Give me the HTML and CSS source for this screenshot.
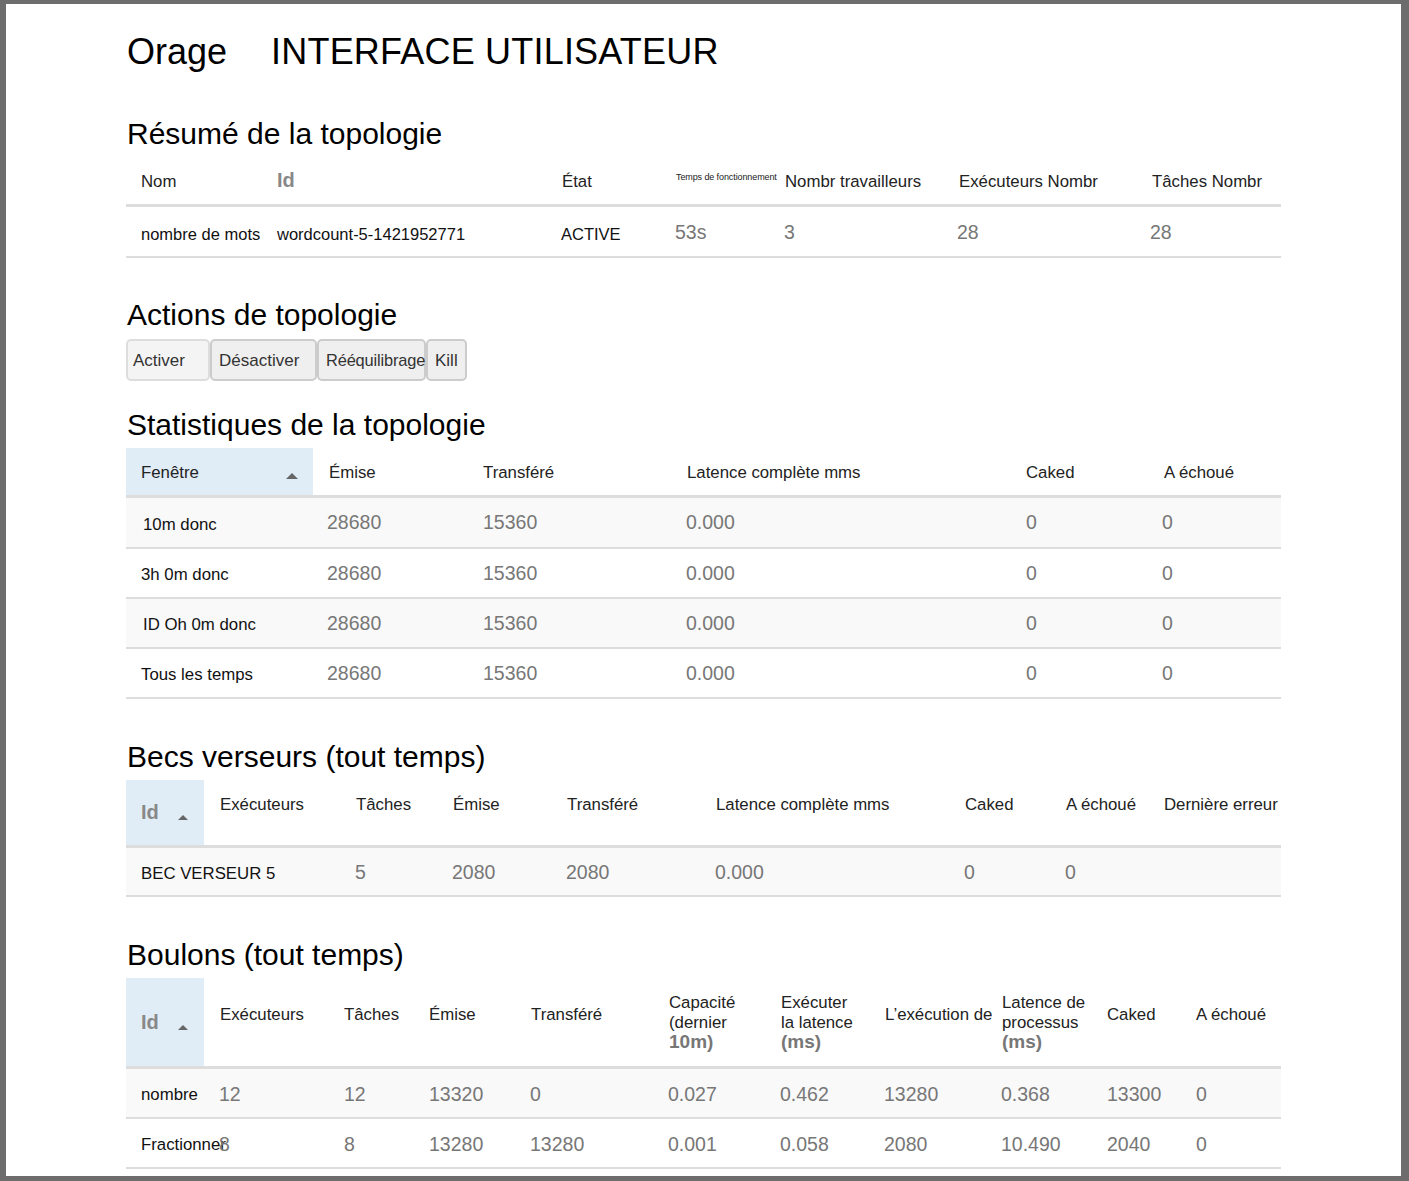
FILE: index.html
```html
<!DOCTYPE html>
<html lang="fr">
<head>
    <meta charset="UTF-8">
    <meta name="viewport" content="width=device-width, initial-scale=1.0">
    <title>Orage INTERFACE UTILISATEUR</title>
    <link rel="stylesheet" href="styles.css">
</head>
<body>
    <div class="page">
        <h1><span>Orage</span><span class="title-app">INTERFACE UTILISATEUR</span></h1>

        <h2>Résumé de la topologie</h2>
        <table class="summary">
            <thead>
                <tr>
                    <th>Nom</th>
                    <th class="muted-head">Id</th>
                    <th>État</th>
                    <th class="tiny">Temps de fonctionnement</th>
                    <th>Nombr travailleurs</th>
                    <th>Exécuteurs Nombr</th>
                    <th>Tâches Nombr</th>
                </tr>
            </thead>
            <tbody>
                <tr>
                    <td class="name">nombre de mots</td>
                    <td class="name">wordcount-5-1421952771</td>
                    <td class="name">ACTIVE</td>
                    <td>53s</td>
                    <td>3</td>
                    <td>28</td>
                    <td>28</td>
                </tr>
            </tbody>
        </table>

        <h2 class="actions-title">Actions de topologie</h2>
        <div class="actions">
            <button class="btn-activate">Activer</button>
            <button class="btn-deactivate">Désactiver</button>
            <button class="btn-rebalance">Rééquilibrage</button>
            <button class="btn-kill">Kill</button>
        </div>

        <h2 class="after-actions">Statistiques de la topologie</h2>
        <table class="stats">
            <thead>
                <tr>
                    <th class="sorted">Fenêtre<span class="caret caret-wide"></span></th>
                    <th>Émise</th>
                    <th>Transféré</th>
                    <th>Latence complète mms</th>
                    <th>Caked</th>
                    <th>A échoué</th>
                </tr>
            </thead>
            <tbody>
                <tr>
                    <td class="name inset">10m donc</td>
                    <td>28680</td><td>15360</td><td>0.000</td><td>0</td><td>0</td>
                </tr>
                <tr>
                    <td class="name">3h 0m donc</td>
                    <td>28680</td><td>15360</td><td>0.000</td><td>0</td><td>0</td>
                </tr>
                <tr>
                    <td class="name inset">ID Oh 0m donc</td>
                    <td>28680</td><td>15360</td><td>0.000</td><td>0</td><td>0</td>
                </tr>
                <tr>
                    <td class="name">Tous les temps</td>
                    <td>28680</td><td>15360</td><td>0.000</td><td>0</td><td>0</td>
                </tr>
            </tbody>
        </table>

        <h2 class="spouts-title">Becs verseurs (tout temps)</h2>
        <table class="spouts raised">
            <thead>
                <tr>
                    <th class="sorted id-head">Id<span class="caret"></span></th>
                    <th>Exécuteurs</th>
                    <th>Tâches</th>
                    <th>Émise</th>
                    <th>Transféré</th>
                    <th>Latence complète mms</th>
                    <th>Caked</th>
                    <th>A échoué</th>
                    <th>Dernière erreur</th>
                </tr>
            </thead>
            <tbody>
                <tr>
                    <td class="name">BEC VERSEUR 5</td>
                    <td></td>
                    <td>5</td><td>2080</td><td>2080</td><td>0.000</td><td>0</td><td>0</td><td></td>
                </tr>
            </tbody>
        </table>

        <h2 class="bolts-title">Boulons (tout temps)</h2>
        <table class="bolts raised">
            <thead>
                <tr>
                    <th class="sorted id-head">Id<span class="caret"></span></th>
                    <th>Exécuteurs</th>
                    <th>Tâches</th>
                    <th>Émise</th>
                    <th>Transféré</th>
                    <th class="multi">Capacité (dernier <b>10m)</b></th>
                    <th class="multi">Exécuter la latence <b>(ms)</b></th>
                    <th>L’exécution de</th>
                    <th class="multi">Latence de processus <b>(ms)</b></th>
                    <th>Caked</th>
                    <th>A échoué</th>
                </tr>
            </thead>
            <tbody>
                <tr>
                    <td class="name">nombre</td>
                    <td>12</td><td>12</td><td>13320</td><td>0</td><td>0.027</td><td>0.462</td><td>13280</td><td>0.368</td><td>13300</td><td>0</td>
                </tr>
                <tr>
                    <td class="name">Fractionner</td>
                    <td>8</td><td>8</td><td>13280</td><td>13280</td><td>0.001</td><td>0.058</td><td>2080</td><td>10.490</td><td>2040</td><td>0</td>
                </tr>
            </tbody>
        </table>
    </div>
</body>
</html>
```

FILE: styles.css
```css
* {
    box-sizing: border-box;
}
html, body {
    height: 100%;
}
body {
    margin: 0;
    padding: 4px 8px 5px 6px;
    background-color: #6d6d6d;
    font-family: "Liberation Sans", Arial, sans-serif;
    overflow: hidden;
}
.page {
    height: 1172px;
    padding: 26px 120px 0;
    background: #fff;
    overflow: hidden;
}
h1 {
    display: flex;
    gap: 44px;
    margin: 0 0 42px 1px;
    font-size: 36px;
    font-weight: normal;
    line-height: 44px;
    color: #000;
}
.title-app {
    letter-spacing: 0.2px;
}
h2 {
    margin: 0 0 5px 1px;
    font-size: 30px;
    font-weight: normal;
    line-height: 36px;
    color: #000;
}
.actions-title {
    margin-top: 39px;
}
.after-actions {
    margin-top: 26px;
}
.spouts-title {
    margin-top: 40px;
}
.bolts-title {
    margin-top: 40px;
}

/* action buttons */
.actions {
    display: flex;
    height: 42px;
    margin-top: 6px;
}
.actions button {
    padding: 2px 0 0 6px;
    background-color: #efefef;
    border: 2px solid #ccc;
    border-radius: 5px;
    font-family: inherit;
    font-size: 17px;
    color: #333;
    text-align: left;
    white-space: nowrap;
}
.actions .btn-activate {
    width: 84px;
    background-color: #f4f4f4;
    border-color: #ddd;
    padding-left: 5px;
}
.actions .btn-deactivate {
    width: 107px;
    padding-left: 7px;
}
.actions .btn-rebalance {
    width: 109px;
    padding-top: 0;
    padding-left: 7px;
    font-size: 16.4px;
    letter-spacing: -0.15px;
}
.actions .btn-kill {
    width: 41px;
    padding-left: 7px;
}

/* tables */
table {
    width: 100%;
    table-layout: fixed;
    border-collapse: separate;
    border-spacing: 0;
}
th, td {
    padding: 0 0 0 15px;
    text-align: left;
    vertical-align: middle;
    white-space: nowrap;
}
th {
    border-bottom: 3px solid #ddd;
    font-size: 16.8px;
    font-weight: normal;
    color: #222;
}
td {
    height: 50px;
    border-bottom: 2px solid #ddd;
    font-size: 19.5px;
    color: #777;
}
td.name {
    padding-top: 4px;
    font-size: 16.8px;
    color: #111;
}
td.inset {
    padding-left: 17px;
}
.stats tbody tr:nth-child(odd),
.spouts tbody tr:nth-child(odd),
.bolts tbody tr:nth-child(odd) {
    background-color: #f9f9f9;
}
.sorted {
    background-color: #e1edf6;
}
.caret {
    display: inline-block;
    margin-left: 19px;
    border-left: 5px solid transparent;
    border-right: 5px solid transparent;
    border-bottom: 5px solid #666;
    vertical-align: -1px;
}
.caret-wide {
    margin-left: 87px;
    border-left-width: 6px;
    border-right-width: 6px;
    border-bottom-width: 6px;
}
.id-head, .muted-head {
    font-size: 20px;
    font-weight: bold;
    color: #888;
}
.id-head {
    padding-bottom: 0;
}

/* summary */
.summary thead tr {
    height: 50px;
}
.summary th {
    padding-top: 2px;
}
.summary td {
    height: 51px;
    padding-top: 2px;
}
.summary td.name {
    padding-top: 5px;
    font-size: 16.5px;
}
.summary th:nth-child(2) {
    padding-top: 0;
    padding-bottom: 1px;
}
.summary th.tiny {
    padding-top: 0;
    padding-bottom: 7px;
    font-size: 9px;
    letter-spacing: -0.1px;
}
.summary th:nth-child(1) { width: 136px; }
.summary th:nth-child(2) { width: 285px; }
.summary th:nth-child(3) { width: 114px; }
.summary th:nth-child(4) { width: 109px; }
.summary th:nth-child(5) { width: 174px; }
.summary th:nth-child(6) { width: 193px; }
.summary th:nth-child(7) { width: 144px; }
.summary td:nth-child(n+3) {
    padding-left: 14px;
}
.summary td:nth-child(n+6) {
    padding-left: 13px;
}

/* window stats */
.stats thead tr {
    height: 50px;
}
.stats th {
    padding-top: 2px;
}
.stats tbody tr:first-child td {
    height: 51px;
}
.stats th:nth-child(1) { width: 187px; }
.stats th:nth-child(2) { width: 155px; }
.stats th:nth-child(3) { width: 204px; }
.stats th:nth-child(4) { width: 339px; }
.stats th:nth-child(5) { width: 138px; }
.stats th:nth-child(6) { width: 132px; }
.stats th:nth-child(2) {
    padding-left: 16px;
}
.stats td:nth-child(2) {
    padding-left: 14px;
}
.stats td:nth-child(4) {
    padding-left: 14px;
}
.stats td:nth-child(6) {
    padding-left: 13px;
}

/* spouts and bolts */
.raised th {
    padding-left: 16px;
    padding-bottom: 14px;
}
.raised td {
    padding-top: 2px;
}
.raised td.name {
    padding-top: 4px;
}
.raised th.id-head {
    padding-left: 15px;
    padding-bottom: 0;
}
.raised th.multi {
    padding-bottom: 0;
    padding-right: 4px;
    line-height: 20px;
    white-space: normal;
}
.raised th.multi:nth-child(7) {
    padding-right: 8px;
}
.multi b {
    display: block;
    font-size: 19px;
    color: #777;
    margin-top: -1px;
}
.spouts thead tr {
    height: 68px;
}
.spouts th {
    padding-bottom: 16px;
}
.spouts td {
    height: 49px;
}
.spouts th:nth-child(1) { width: 78px; }
.spouts th:nth-child(2) { width: 136px; }
.spouts th:nth-child(3) { width: 97px; }
.spouts th:nth-child(4) { width: 114px; }
.spouts th:nth-child(5) { width: 149px; }
.spouts th:nth-child(6) { width: 249px; }
.spouts th:nth-child(7) { width: 101px; }
.spouts th:nth-child(8) { width: 98px; }
.spouts th:nth-child(9) { width: 133px; }
.bolts thead tr {
    height: 91px;
}
.bolts th:nth-child(1) { width: 78px; }
.bolts th:nth-child(2) { width: 124px; }
.bolts th:nth-child(3) { width: 85px; }
.bolts th:nth-child(4) { width: 102px; }
.bolts th:nth-child(5) { width: 138px; }
.bolts th:nth-child(6) { width: 112px; }
.bolts th:nth-child(7) { width: 104px; }
.bolts th:nth-child(8) { width: 117px; }
.bolts th:nth-child(9) { width: 105px; }
.bolts th:nth-child(10) { width: 89px; }
.bolts th:nth-child(11) { width: 101px; }
.bolts td {
    padding-left: 15px;
}
.bolts td:nth-child(3),
.bolts td:nth-child(4),
.bolts td:nth-child(10),
.bolts td:nth-child(11) {
    padding-left: 16px;
}
.bolts th:nth-child(8) {
    padding-right: 0;
}
```
